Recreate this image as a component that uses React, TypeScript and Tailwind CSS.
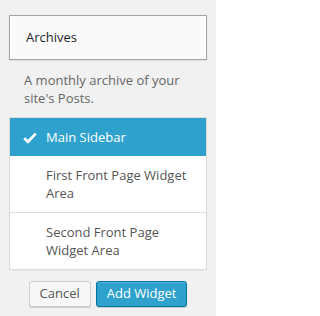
import React from "react";

export default function App() {
  const font = { fontFamily: '"Open Sans", "Liberation Sans", sans-serif' };
  return (
    <div
      className="w-[216px] h-[316px] bg-[#f1f1f1] pt-[15px] px-[9px] overflow-hidden"
      style={font}
    >
      <div className="h-[45px] border border-[#a5a5a5] bg-[#fafafa] shadow-[0_1px_2px_rgba(0,0,0,0.08)] flex items-center px-[16px] text-[13px] text-[#23282d]">
        Archives
      </div>
      <p className="mt-[11px] px-[15px] text-[13px] leading-[18px] text-[#666]">
        A monthly archive of your site's Posts.
      </p>
      <ul className="mt-[10px] bg-white border border-[#dcdcdc] shadow-[0_1px_1px_rgba(0,0,0,0.04)] text-[13px] leading-[18px]">
        <li className="relative h-[38px] bg-[#2ea2cc] text-white pl-[36px] pr-[15px] flex items-center">
          <svg
            className="absolute left-[13px] top-[14px]"
            width="14"
            height="12"
            viewBox="0 0 14 12"
          >
            <path
              d="M1.2 6.2 L5 9.8 L12.8 1.6"
              fill="none"
              stroke="#fff"
              strokeWidth="2.8"
              strokeLinejoin="miter"
            />
          </svg>
          Main Sidebar
        </li>
        <li className="pl-[36px] pr-[15px] py-[10px] border-b border-[#dcdcdc] text-[#555]">
          First Front Page Widget Area
        </li>
        <li className="pl-[36px] pr-[15px] py-[10px] text-[#555]">
          Second Front Page Widget Area
        </li>
      </ul>
      <div className="mt-[11px] flex justify-center gap-[5px] text-[13px]">
        <button className="h-[26px] px-[10px] rounded-[3px] border border-[#cccccc] bg-[#f7f7f7] text-[#555] shadow-[0_1px_0_#ccc]">
          Cancel
        </button>
        <button className="h-[26px] px-[10px] rounded-[3px] border border-[#0074a2] bg-[#2ea2cc] text-white shadow-[inset_0_1px_0_rgba(120,200,230,0.5),0_1px_0_rgba(0,0,0,0.15)]">
          Add Widget
        </button>
      </div>
    </div>
  );
}
